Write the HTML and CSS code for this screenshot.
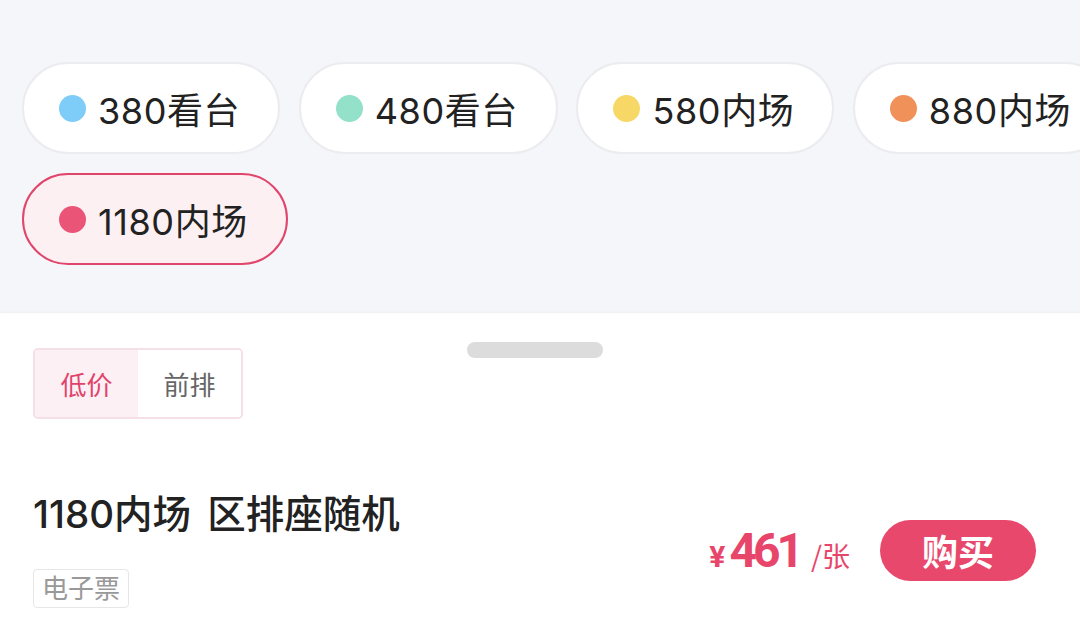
FILE: index.html
```html
<!DOCTYPE html>
<html lang="zh-CN">
<head>
<meta charset="utf-8">
<title>票档选择</title>
<link rel="stylesheet" href="styles.css">
</head>
<body>
<div class="page">
  <section class="areas">
    <div class="pill-list">
      <div class="pill"><span class="dot dot-blue"></span><span class="pill-text">380看台</span></div>
      <div class="pill"><span class="dot dot-teal"></span><span class="pill-text">480看台</span></div>
      <div class="pill"><span class="dot dot-yellow"></span><span class="pill-text">580内场</span></div>
      <div class="pill"><span class="dot dot-orange"></span><span class="pill-text">880内场</span></div>
      <div class="pill pill-active"><span class="dot dot-pink"></span><span class="pill-text">1180内场</span></div>
    </div>
  </section>
  <section class="sheet">
    <span class="handle"></span>
    <div class="seg">
      <span class="seg-item seg-active">低价</span>
      <span class="seg-item">前排</span>
    </div>
    <div class="ticket">
      <div class="ticket-info">
        <h2 class="ticket-title">1180内场 区排座随机</h2>
        <span class="tag">电子票</span>
      </div>
      <div class="ticket-buy">
        <span class="price"><span class="cur">¥</span><span class="num">461</span><span class="unit">/张</span></span>
        <button class="buy">购买</button>
      </div>
    </div>
  </section>
</div>
</body>
</html>
```
FILE: styles.css
```css
* { box-sizing: border-box; }
html, body { margin: 0; padding: 0; }
body {
  width: 1080px;
  height: 642px;
  overflow: hidden;
  font-family: "Inter", "Noto Sans CJK SC", sans-serif;
  color: #222;
  background: #fff;
}
.page {
  width: 1080px;
  height: 642px;
  display: flex;
  flex-direction: column;
  overflow: hidden;
}
.areas {
  height: 313px;
  flex: none;
  background: #f5f6f9;
  padding: 62px 0 0 22px;
  overflow: hidden;
}
.pill-list {
  width: 1110px;
  display: flex;
  flex-wrap: wrap;
  gap: 19px 18.5px;
}
.pill {
  height: 92px;
  display: flex;
  align-items: center;
  gap: 12px;
  padding: 0 38px 0 35px;
  background: #fff;
  border: 2px solid #ececf0;
  border-radius: 46px;
  font-size: 36px;
  letter-spacing: 0.6px;
  color: #222;
  white-space: nowrap;
}
.pill-active {
  background: #fdf0f3;
  border-color: #e0466b;
}
.dot {
  width: 27px;
  height: 27px;
  border-radius: 50%;
  flex: none;
}
.dot-blue { background: #7dcdf8; }
.dot-teal { background: #93e1c8; }
.dot-yellow { background: #f7d866; }
.dot-orange { background: #f0915a; }
.dot-pink { background: #ea5477; }

.sheet {
  flex: 1;
  position: relative;
  background: #fff;
  padding: 35px 44px 0 33px;
  box-shadow: 0 -1px 3px rgba(40, 50, 90, 0.04);
}
.handle {
  position: absolute;
  top: 29px;
  left: 50%;
  margin-left: -73px;
  width: 136px;
  height: 16px;
  border-radius: 8px;
  background: #dcdcdc;
}
.seg {
  display: inline-flex;
  height: 71px;
  border: 2px solid #f6e0e7;
  border-radius: 5px;
  overflow: hidden;
}
.seg-item {
  width: 103px;
  display: flex;
  align-items: center;
  justify-content: center;
  font-size: 26px;
  color: #666;
  background: #fff;
}
.seg-active {
  background: #fdf0f4;
  color: #e0446b;
}
.ticket {
  margin-top: 73px;
  display: flex;
  align-items: center;
  justify-content: space-between;
}
.ticket-info {
  display: flex;
  flex-direction: column;
  align-items: flex-start;
  gap: 33px;
}
.ticket-title {
  margin: 0;
  font-size: 38.5px;
  line-height: 44px;
  font-weight: 500;
  word-spacing: 6px;
  color: #222;
}
.tag {
  height: 39px;
  line-height: 37px;
  padding: 0 8px;
  font-size: 26px;
  color: #999;
  border: 1px solid #e6e6e6;
  border-radius: 4px;
}
.ticket-buy {
  display: flex;
  align-items: center;
  gap: 30px;
}
.price {
  display: flex;
  align-items: baseline;
  color: #e8456b;
  font-family: "Roboto", "Noto Sans CJK SC", sans-serif;
}
.cur {
  font-size: 30px;
  font-weight: 700;
  margin-right: 4px;
}
.num {
  font-size: 48px;
  font-weight: 700;
  letter-spacing: -4px;
}
.unit {
  font-family: "Noto Sans CJK SC", sans-serif;
  font-size: 28px;
  margin-left: 11px;
}
.buy {
  width: 156px;
  height: 61px;
  border: none;
  border-radius: 31px;
  background: #e8486c;
  color: #fff;
  font-family: "Noto Sans CJK SC", sans-serif;
  font-size: 36px;
  font-weight: 600;
  padding: 0;
}
```
